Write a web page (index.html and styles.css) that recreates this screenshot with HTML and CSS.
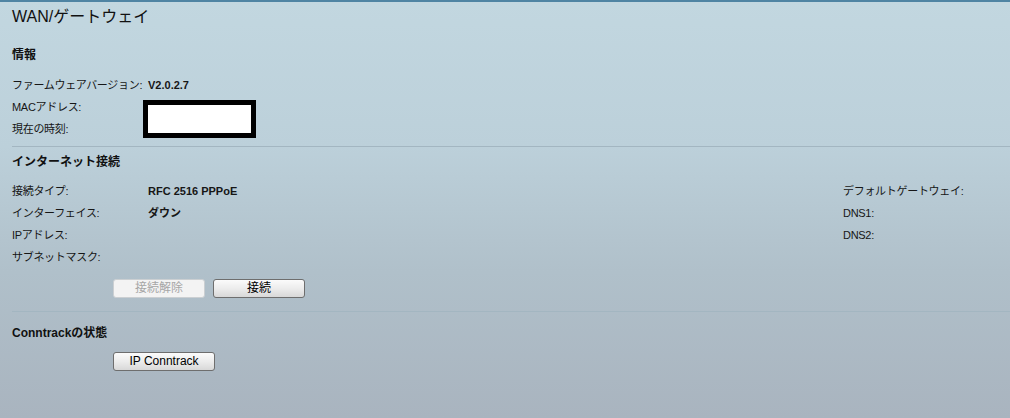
FILE: index.html
```html
<!DOCTYPE html>
<html lang="ja">
<head>
    <meta charset="UTF-8">
    <meta name="viewport" content="width=device-width, initial-scale=1.0">
    <title>WAN/ゲートウェイ</title>
    <link rel="stylesheet" href="styles.css">
</head>
<body>
    <div class="page">
        <h1 class="title">WAN/ゲートウェイ</h1>

        <section class="panel panel-info">
            <h2 class="panel-head">情報</h2>
            <div class="fields">
                <div class="field"><span class="label">ファームウェアバージョン:</span><span class="value">V2.0.2.7</span></div>
                <div class="field"><span class="label">MACアドレス:</span><span class="value"><span class="redact"></span></span></div>
                <div class="field"><span class="label">現在の時刻:</span><span class="value"></span></div>
            </div>
        </section>

        <section class="panel panel-net">
            <h2 class="panel-head">インターネット接続</h2>
            <div class="columns">
                <div class="fields">
                    <div class="field"><span class="label">接続タイプ:</span><span class="value">RFC 2516 PPPoE</span></div>
                    <div class="field"><span class="label">インターフェイス:</span><span class="value">ダウン</span></div>
                    <div class="field"><span class="label">IPアドレス:</span><span class="value"></span></div>
                    <div class="field"><span class="label">サブネットマスク:</span><span class="value"></span></div>
                </div>
                <div class="fields fields-side">
                    <div class="field"><span class="label">デフォルトゲートウェイ:</span></div>
                    <div class="field"><span class="label">DNS1:</span></div>
                    <div class="field"><span class="label">DNS2:</span></div>
                </div>
            </div>
            <div class="actions">
                <button class="btn" disabled>接続解除</button>
                <button class="btn">接続</button>
            </div>
        </section>

        <section class="panel panel-conn">
            <h2 class="panel-head">Conntrackの状態</h2>
            <div class="actions actions-conn">
                <button class="btn btn-wide">IP Conntrack</button>
            </div>
        </section>
    </div>
</body>
</html>
```

FILE: styles.css
```css
html {
    height: 100%;
}

body {
    margin: 0;
    min-height: 100%;
    box-sizing: border-box;
    border-top: 2px solid #4f84a3;
    background: linear-gradient(#c2d7e0 0%, #bcd0da 35%, #b0c0ca 65%, #a9b4bf 100%);
    font-family: "Liberation Sans", "Noto Sans CJK JP", sans-serif;
    color: #161616;
}

.page {
    padding-left: 12px;
}

.title {
    margin: 0;
    font-size: 16px;
    font-weight: normal;
    line-height: 30px;
    color: #111;
}

.panel {
    border-top: 1px solid #a3b6c1;
}

.panel-info {
    border-top: none;
    padding: 12px 0 6px;
}

.panel-net {
    padding: 4px 0 13px;
}

.panel-conn {
    padding: 10px 0 0;
}

.panel-head {
    margin: 0;
    font-size: 12px;
    font-weight: bold;
    line-height: 22px;
    color: #111;
}

.fields {
    margin-top: 8px;
}

.panel-net .fields {
    margin-top: 7px;
}

.columns {
    display: flex;
    justify-content: space-between;
}

.fields-side {
    width: 167px;
}

.field {
    display: flex;
    height: 22px;
    line-height: 22px;
    font-size: 11px;
}

.label {
    width: 135px;
    flex-shrink: 0;
    white-space: nowrap;
    letter-spacing: -0.3px;
}

.fields-side .label {
    width: auto;
}

.value {
    position: relative;
    margin-left: 1px;
    font-weight: bold;
}

.redact {
    position: absolute;
    left: -5px;
    top: 4px;
    width: 113px;
    height: 38px;
    box-sizing: border-box;
    border: 5px solid #000;
    background: #fff;
}

.actions {
    display: flex;
    gap: 8px;
    margin-top: 11px;
    padding-left: 101px;
}

.actions-conn {
    margin-top: 8px;
}

.btn {
    width: 92px;
    height: 19px;
    padding: 0;
    box-sizing: border-box;
    border: 1px solid #6e6e6e;
    border-radius: 3px;
    background: linear-gradient(#fbfbfb, #ececec 50%, #d8d8d8);
    font-family: "Liberation Sans", "Noto Sans CJK JP", sans-serif;
    font-size: 12px;
    line-height: 17px;
    color: #000;
    cursor: pointer;
}

.btn:disabled {
    border-color: #cbcfd2;
    background: #f3f3f3;
    color: #a6a6a6;
    cursor: default;
}

.btn-wide {
    width: 102px;
}
```
